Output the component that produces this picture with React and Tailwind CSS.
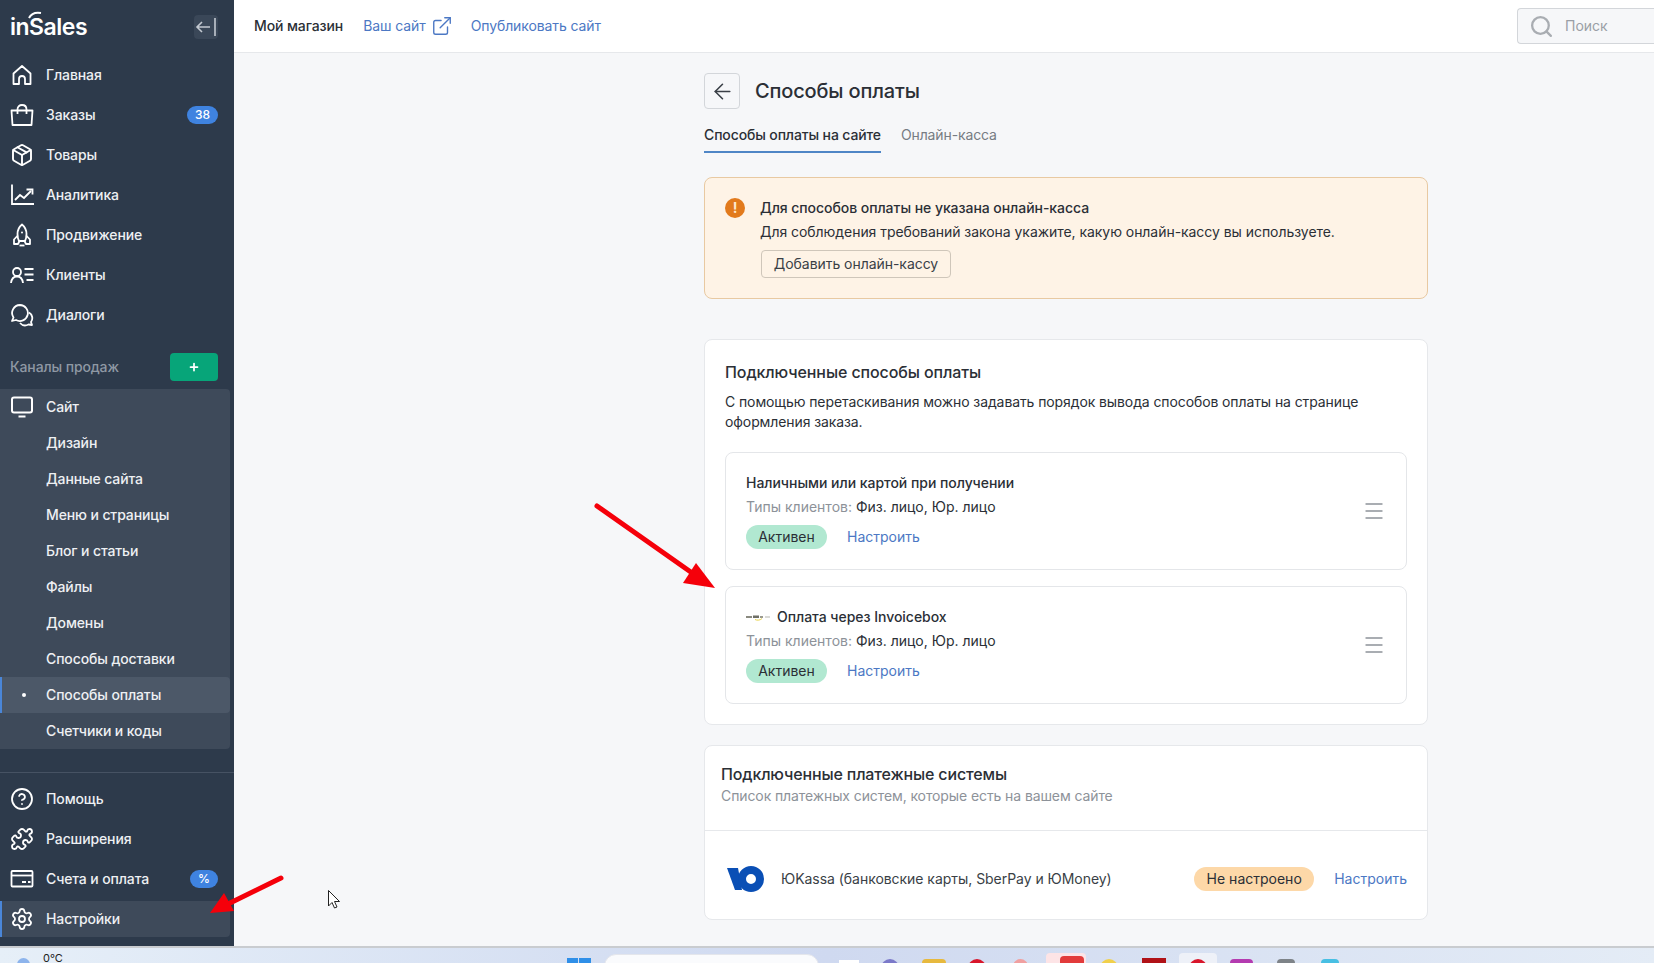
// Payment methods settings page of the shop admin.
import {
  ArrowLeft,
  CircleHelp,
  ExternalLink,
  Menu,
  Package,
  Plus,
  Puzzle,
  Search,
  Settings,
} from "lucide-react";

const FONT = "font-['Inter','Noto_Sans',sans-serif]";

function HouseIcon() {
  return (
    <svg width="24" height="24" viewBox="0 0 24 24" fill="none" stroke="currentColor" strokeWidth="1.8" strokeLinejoin="round">
      <path d="M3.500 10.500L12 3l8.500 7.500V21h-5.500v-5a3 3 0 0 0-6 0v5H3.500z" />
    </svg>
  );
}

function BagIcon() {
  return (
    <svg width="24" height="24" viewBox="0 0 24 24" fill="none" stroke="currentColor" strokeWidth="1.8">
      <path d="M1.500 7.500h21L21.500 22h-19z" strokeLinejoin="round" />
      <path d="M7.500 11V6.500C7.500 3.500 9.500 2 12 2s4.500 1.500 4.500 4.500V11" />
    </svg>
  );
}

function ChartIcon() {
  return (
    <svg width="24" height="24" viewBox="0 0 24 24" fill="none" stroke="currentColor" strokeWidth="1.8">
      <path d="M2 1.500V21h22" />
      <path d="M5 17l5-5 4 3 7-7" />
      <path d="M16.500 6.500h6v5" />
    </svg>
  );
}

function RocketIcon() {
  return (
    <svg width="24" height="24" viewBox="0 0 24 24" fill="none" stroke="currentColor" strokeWidth="1.8" strokeLinejoin="round">
      <path d="M12 1.500c3 2.500 4.500 6 4.500 9.500 0 2.500-.5 5-1.500 7H9c-1-2-1.500-4.500-1.500-7 0-3.500 1.500-7 4.500-9.500z" />
      <path d="M7.800 12.500L4 16.500V21h4l1.500-3M16.200 12.500l3.800 4V21h-4l-1.500-3" />
      <path d="M9.500 22.500h5" />
      <circle cx="12" cy="9.500" r="1" fill="currentColor" stroke="none" />
    </svg>
  );
}

function ClientsIcon() {
  return (
    <svg width="24" height="24" viewBox="0 0 24 24" fill="none" stroke="currentColor" strokeWidth="1.8">
      <circle cx="7" cy="9" r="4" />
      <path d="M1 20c.5-4 3-6.500 6-6.500s5.500 2.500 6 6.500" />
      <path d="M14.500 6h9M14.500 11.500h9M16.500 17h7" />
    </svg>
  );
}

function ChatsIcon() {
  return (
    <svg width="24" height="24" viewBox="0 0 24 24" fill="none" stroke="currentColor" strokeWidth="1.8" strokeLinejoin="round">
      <path d="M10 2a8 8 0 0 0-6.500 12.500L2 18l4-1a8 8 0 1 0 4-15z" />
      <path d="M19 9.500a6.500 6.500 0 0 1 2 9.500l1 3-3.500-.5a7 7 0 0 1-8.500-1.500" />
    </svg>
  );
}

function MonitorIcon() {
  return (
    <svg width="24" height="24" viewBox="0 0 24 24" fill="none" stroke="currentColor" strokeWidth="2">
      <rect x="2" y="2.500" width="20" height="15" rx="2" />
      <path d="M8.500 21.500h7" />
    </svg>
  );
}

function CardIcon() {
  return (
    <svg width="24" height="24" viewBox="0 0 24 24" fill="none" stroke="currentColor" strokeWidth="1.8">
      <rect x="1.500" y="4" width="21" height="15.500" rx="1" />
      <path d="M1.500 8.500h21" />
      <path d="M12 15h4M18 15h2.500" />
    </svg>
  );
}

const MAIN_NAV = [
  { label: "Главная", icon: <HouseIcon /> },
  { label: "Заказы", icon: <BagIcon />, badge: "38" },
  { label: "Товары", icon: <Package size={24} strokeWidth={1.9} /> },
  { label: "Аналитика", icon: <ChartIcon /> },
  { label: "Продвижение", icon: <RocketIcon /> },
  { label: "Клиенты", icon: <ClientsIcon /> },
  { label: "Диалоги", icon: <ChatsIcon /> },
];

const SITE_NAV = [
  "Дизайн",
  "Данные сайта",
  "Меню и страницы",
  "Блог и статьи",
  "Файлы",
  "Домены",
  "Способы доставки",
  "Способы оплаты",
  "Счетчики и коды",
];

const ACTIVE_SITE_ITEM = "Способы оплаты";

function NavRow({ item }) {
  return (
    <div className="flex h-10 items-center pr-[16px] pl-[10px]">
      <span className="flex w-6 justify-center text-white">{item.icon}</span>
      <span className="ml-3 text-sm font-medium tracking-[-0.12px] text-[#eef0f3]">{item.label}</span>
      {item.badge && (
        <span className="ml-auto flex h-[18px] min-w-[26px] items-center justify-center rounded-full bg-[#3f83e0] px-2 text-xs font-medium text-white">
          {item.badge}
        </span>
      )}
    </div>
  );
}

function Sidebar() {
  return (
    <aside className="flex w-[234px] shrink-0 flex-col bg-[#2d3a4b]">
      <div className="flex h-[55px] items-start justify-between pt-[15px] pr-[16px] pl-[10px]">
        <div className="relative text-[23px] leading-[24px] font-semibold tracking-[-0.5px] text-white">
          inSales
          <svg className="absolute top-[-4px] left-[18px]" width="14" height="8" viewBox="0 0 14 8" fill="none" stroke="white" strokeWidth="2">
            <path d="M1 7c2-4 6-6 12-5" />
          </svg>
        </div>
        <button className="flex h-6 w-6 items-center justify-center rounded bg-[#3a4758] text-[#c3c9d1]">
          <svg width="22" height="22" viewBox="0 0 22 22" fill="none" stroke="currentColor" strokeWidth="1.6">
            <path d="M2 11h13M7 6l-5 5 5 5M20 2v18" />
          </svg>
        </button>
      </div>

      {MAIN_NAV.map((item) => (
        <NavRow key={item.label} item={item} />
      ))}

      <div className="mt-[12px] flex h-10 items-center justify-between pr-[16px] pl-[10px]">
        <span className="text-sm font-medium tracking-[-0.12px] text-[#8f98a4]">Каналы продаж</span>
        <button className="flex h-7 w-12 items-center justify-center rounded bg-[#07a579] text-white">
          <Plus size={12} strokeWidth={3.5} />
        </button>
      </div>

      {/* Site submenu */}
      <div className="mt-[2px] w-[230px] overflow-hidden rounded-r bg-[#3e4a5a] pb-0">
        <div className="flex h-9 items-center pl-[10px]">
          <span className="flex w-6 justify-center text-white">
            <MonitorIcon />
          </span>
          <span className="ml-3 text-sm font-medium tracking-[-0.12px] text-[#eef0f3]">Сайт</span>
        </div>
        {SITE_NAV.map((label) => {
          const active = label === ACTIVE_SITE_ITEM;
          return (
            <div
              key={label}
              className={`relative flex h-9 items-center pl-[46px] text-sm font-medium tracking-[-0.12px] text-[#eef0f3] ${active ? "rounded-r bg-[#4c5868]" : ""}`}
            >
              {active && (
                <>
                  <span className="absolute top-0 left-0 h-full w-[2px] bg-[#4a86d8]" />
                  <span className="absolute top-[16px] left-[22px] h-1 w-1 rounded-full bg-white" />
                </>
              )}
              {label}
            </div>
          );
        })}
      </div>

      <div className="mt-[23px] border-t border-[#465263] pt-[6px]">
        <NavRow item={{ label: "Помощь", icon: <CircleHelp size={24} strokeWidth={1.8} /> }} />
        <NavRow item={{ label: "Расширения", icon: <Puzzle size={24} strokeWidth={1.8} /> }} />
        <NavRow item={{ label: "Счета и оплата", icon: <CardIcon />, badge: "%" }} />
        <div className="relative mt-[2px] flex h-9 w-[230px] items-center rounded-r bg-[#3e4a5a] pl-[10px]">
          <span className="absolute top-0 left-0 h-full w-[2px] bg-[#4a86d8]" />
          <span className="flex w-6 justify-center text-white">
            <Settings size={24} strokeWidth={1.8} />
          </span>
          <span className="ml-3 text-sm font-medium tracking-[-0.12px] text-[#eef0f3]">Настройки</span>
        </div>
      </div>
    </aside>
  );
}

function Header() {
  return (
    <header className="flex h-[53px] shrink-0 items-center border-b border-[#e6e8eb] bg-white pl-[20px] text-sm">
      <span className="font-medium tracking-[-0.1px] text-[#2b2f36]">Мой магазин</span>
      <a className="ml-[20px] flex items-center gap-[5px] tracking-[-0.1px] text-[#4c78c4]">
        Ваш сайт <ExternalLink size={22} strokeWidth={1.5} />
      </a>
      <a className="ml-[18px] tracking-[-0.1px] text-[#4c78c4]">Опубликовать сайт</a>
      <div className="ml-auto flex h-9 w-[137px] items-center gap-[11px] rounded-l border border-r-0 border-[#d3d6da] bg-[#f6f7f9] pl-[11px] text-[#9a9fa6]">
        <Search size={25} strokeWidth={2.2} className="text-[#a9adb2]" />
        Поиск
      </div>
    </header>
  );
}

function StatusPill({ tone, children }) {
  const cls = tone === "green" ? "bg-[#b1e8d1] w-[81px]" : "bg-[#fdd8a8] w-[120px]";
  return (
    <span className={`flex h-6 shrink-0 items-center justify-center rounded-full text-sm text-[#2b2f36] ${cls}`}>
      {children}
    </span>
  );
}

// Tiny raster logo in the original: reads as a blurred grey word with a yellow swoosh.
function InvoiceboxLogo() {
  return (
    <svg width="24" height="8" viewBox="0 0 24 8">
      <rect x="0" y="3" width="6" height="2" fill="#8a8a80" />
      <rect x="7" y="2.500" width="6" height="2.500" fill="#6f6f66" />
      <rect x="14" y="3" width="3" height="2" fill="#9a9a90" />
      <rect x="19" y="3.500" width="5" height="1" fill="#b5b5ad" />
      <path d="M9 6.500c2 1 5 1 7-1" stroke="#e8d24a" strokeWidth="1" fill="none" />
    </svg>
  );
}

function MethodCard({ title, logo }) {
  return (
    <div className="flex h-[118px] items-center justify-between rounded-lg border border-[#e4e6e9] bg-white pr-[20px] pl-[20px]">
      <div>
        <div className="flex h-5 items-center gap-[7px] text-sm font-medium tracking-[-0.03px] text-[#2b2f36]">
          {logo}
          {title}
        </div>
        <div className="mt-1 h-5 text-sm leading-5 text-[#2b2f36]">
          <span className="text-[#8d9299]">Типы клиентов:</span> Физ. лицо, Юр. лицо
        </div>
        <div className="mt-2 flex items-center gap-5">
          <StatusPill tone="green">Активен</StatusPill>
          <a className="text-sm text-[#4c78c4]">Настроить</a>
        </div>
      </div>
      <Menu size={24} strokeWidth={1.4} className="text-[#8d9299]" />
    </div>
  );
}

function Content() {
  return (
    <main className="min-h-0 flex-1 overflow-hidden pl-[470px] text-[#2b2f36]">
      <div className="w-[724px]">
        <div className="mt-[20px] flex items-center gap-[15px]">
          <button className="flex h-9 w-9 items-center justify-center rounded border border-[#d3d6da] text-[#3a3f46]">
            <ArrowLeft size={25} strokeWidth={1.5} />
          </button>
          <h1 className="text-xl font-medium tracking-[-0.15px]">Способы оплаты</h1>
        </div>

        <div className="mt-[15px] flex h-[29px] items-start gap-[20px] text-sm leading-[22px] tracking-[-0.13px]">
          <span className="h-[29px] border-b-2 border-[#4f86c6] font-medium">Способы оплаты на сайте</span>
          <span className="text-[#777c83]">Онлайн-касса</span>
        </div>

        <div className="mt-[24px] flex h-[122px] gap-[15px] rounded-lg border border-[#e8c9a2] bg-[#fef3e6] pt-[20px] pl-[20px]">
          <span className="flex h-5 w-5 shrink-0 items-center justify-center rounded-full bg-[#e27a1c] text-sm font-bold text-[#fde8cf]">
            !
          </span>
          <div className="text-sm tracking-[-0.05px]">
            <div className="leading-5 font-medium">Для способов оплаты не указана онлайн-касса</div>
            <div className="mt-1 leading-5">Для соблюдения требований закона укажите, какую онлайн-кассу вы используете.</div>
            <button className="mt-[8px] ml-[1px] h-7 w-[190px] rounded border border-[#cfc6ba] text-[#3a3f46]">
              Добавить онлайн-кассу
            </button>
          </div>
        </div>

        <section className="mt-[40px] h-[386px] rounded-lg border border-[#e6e8eb] bg-white px-5 pt-[22px]">
          <h2 className="text-base leading-5 font-medium tracking-[-0.1px]">Подключенные способы оплаты</h2>
          <p className="mt-[10px] text-sm leading-5 tracking-[-0.1px]">
            С помощью перетаскивания можно задавать порядок вывода способов оплаты на странице оформления заказа.
          </p>
          <div className="mt-[20px] flex flex-col gap-4">
            <MethodCard title="Наличными или картой при получении" />
            <MethodCard title="Оплата через Invoicebox" logo={<InvoiceboxLogo />} />
          </div>
        </section>

        <section className="mt-[20px] h-[175px] rounded-lg border border-[#e6e8eb] bg-white">
          <div className="h-[85px] border-b border-[#e6e8eb] px-[16px] pt-[18px]">
            <h2 className="text-base leading-5 font-medium tracking-[-0.15px]">Подключенные платежные системы</h2>
            <p className="mt-[2px] text-sm leading-5 tracking-[-0.1px] text-[#8d9299]">Список платежных систем, которые есть на вашем сайте</p>
          </div>
          <div className="flex h-[89px] items-center pt-[6px] pr-[20px] pl-[22px]">
            <svg width="37" height="26" viewBox="0 0 37 26">
              <path d="M0 2h11l4 22H8z" fill="#0a4fb5" />
              <path fillRule="evenodd" d="M24 0a13 13 0 1 1 0 26a13 13 0 1 1 0-26zM24 8a5 5 0 1 0 0 10a5 5 0 1 0 0-10z" fill="#0a4fb5" />
            </svg>
            <span className="ml-[17px] text-sm tracking-[-0.04px] text-[#3a3f46]">ЮKassa (банковские карты, SberPay и ЮMoney)</span>
            <span className="ml-auto">
              <StatusPill tone="orange">Не настроено</StatusPill>
            </span>
            <a className="ml-5 text-sm text-[#4c78c4]">Настроить</a>
          </div>
        </section>
      </div>
    </main>
  );
}

// Only the top edge of the Windows taskbar is in frame, so its icons are cut off.
function Taskbar() {
  return (
    <footer className="flex h-[17px] shrink-0 items-start overflow-hidden border-t-2 border-[#c9ccd0] bg-gradient-to-r from-[#e6eff8] via-[#cfd9f0] to-[#e4ecf6] pl-[17px]">
      <span className="mt-[10px] h-[13px] w-[13px] rounded-full bg-[#8db4ec]" />
      <span className="ml-[13px] mt-[4px] text-[11px] leading-[13px] text-[#222]">0°C</span>
      <span className="mt-[10px] ml-[504px] grid h-[24px] w-[24px] grid-cols-2 gap-[1px]">
        <i className="bg-[#2f8fe8]" />
        <i className="bg-[#2f8fe8]" />
      </span>
      <span className="mt-[6px] ml-[13px] h-[24px] w-[215px] rounded-full border border-[#e4e6ec] bg-[#fafbfd]" />
      <span className="mt-[12px] ml-[20px] h-5 w-5 bg-white" />
      <span className="mt-[11px] ml-[22px] h-5 w-[18px] rounded-full bg-[#7b79c9]" />
      <span className="mt-[11px] ml-[23px] h-5 w-6 rounded-t-sm bg-[#e7b93e]" />
      <span className="mt-[11px] ml-[22px] h-5 w-[18px] rounded-full bg-[#d8162b]" />
      <span className="mt-[11px] ml-[27px] h-5 w-[15px] rounded-t-full bg-[#f0a0a0]" />
      <span className="mt-[5px] ml-[18px] flex h-6 w-10 justify-end rounded-t bg-[#fde4e6] pt-[3px] pr-[2px]">
        <span className="h-4 w-6 rounded-sm bg-[#e23b3b]" />
      </span>
      <span className="mt-[11px] ml-[14px] h-5 w-[18px] rounded-t-full bg-[#f1d04b]" />
      <span className="mt-[10px] ml-[24px] h-5 w-6 bg-[#b01217]" />
      <span className="mt-[5px] ml-[13px] flex h-6 w-[38px] justify-center rounded-t bg-[#eef1f8] pt-[6px]">
        <span className="h-5 w-[18px] rounded-full bg-[#d8162b]" />
      </span>
      <span className="mt-[11px] ml-[13px] h-5 w-[23px] rounded-t bg-[#b43bb0]" />
      <span className="mt-[11px] ml-[24px] h-5 w-[18px] rounded-t bg-[#7e8388]" />
      <span className="mt-[11px] ml-[26px] h-5 w-[18px] rounded-t-sm bg-[#48bfe3]" />
    </footer>
  );
}

// Red annotation arrows and the mouse pointer captured on top of the page.
function Annotations() {
  return (
    <svg className="pointer-events-none absolute inset-0" width="1654" height="963" viewBox="0 0 1654 963" fill="none">
      <path d="M597 506L695 575" stroke="#f5000a" strokeWidth="5" strokeLinecap="round" />
      <path d="M715 588L696 563L683 583z" fill="#f5000a" />
      <path d="M281 878L228 904" stroke="#f5000a" strokeWidth="5" strokeLinecap="round" />
      <path d="M210 913L224 893L234 911z" fill="#f5000a" />
      <path d="M328.500 890.500V906l3.500-3.500 2.500 5.500 2.500-1-2.500-5.500h5z" fill="white" stroke="#222" strokeWidth="1" />
    </svg>
  );
}

export default function App() {
  return (
    <div className={`relative flex h-[963px] w-[1654px] flex-col overflow-hidden bg-[#f6f7f9] ${FONT}`}>
      <div className="flex min-h-0 flex-1">
        <Sidebar />
        <div className="flex min-w-0 flex-1 flex-col">
          <Header />
          <Content />
        </div>
      </div>
      <Taskbar />
      <Annotations />
    </div>
  );
}
